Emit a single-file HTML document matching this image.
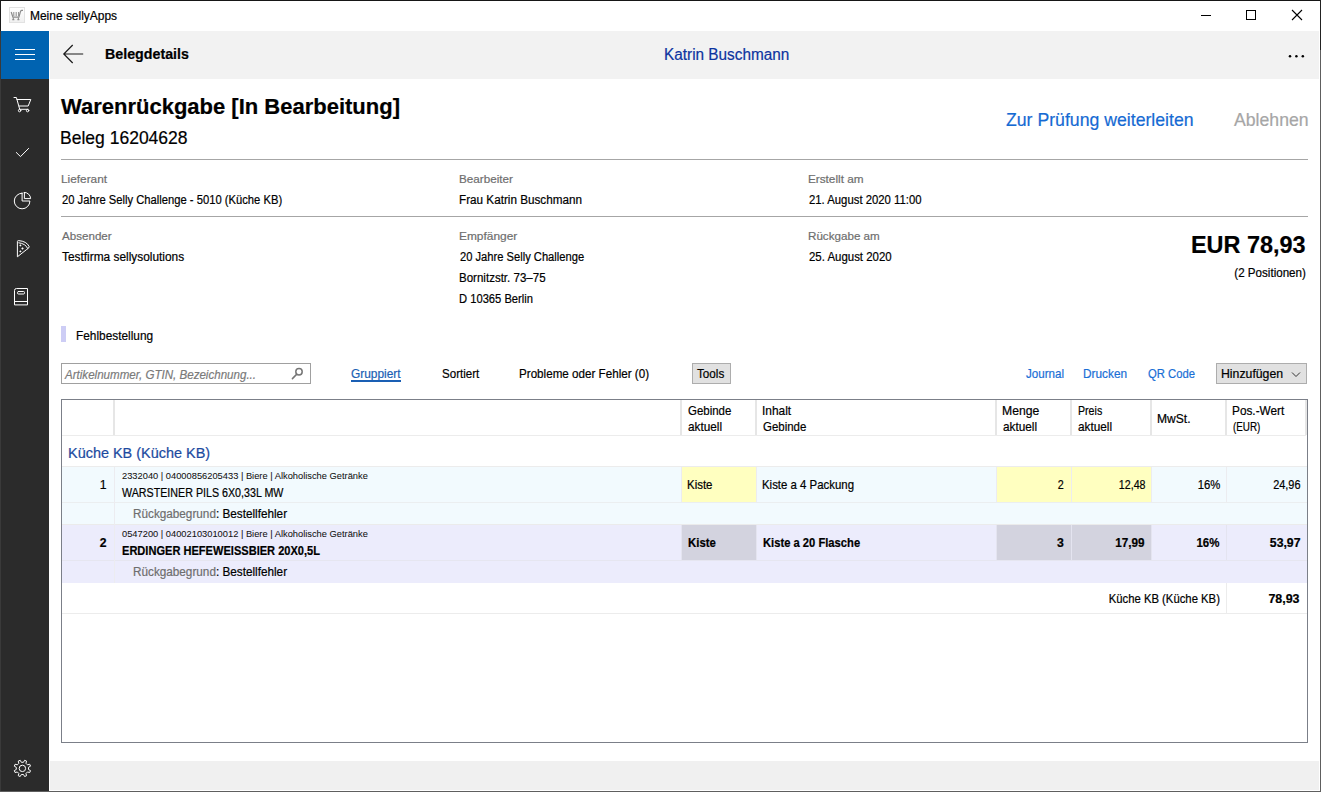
<!DOCTYPE html>
<html><head><meta charset="utf-8"><style>
html,body{margin:0;padding:0}
body{width:1321px;height:792px;position:relative;overflow:hidden;background:#fff;font-family:"Liberation Sans",sans-serif}
.t{position:absolute;white-space:nowrap;-webkit-text-stroke:0.2px currentColor}
.b{position:absolute}
svg{position:absolute;overflow:visible}

</style></head><body>
<!-- window border -->
<div class="b" style="left:0;top:0;width:1321px;height:1px;background:#161616"></div>
<div class="b" style="left:0;top:0;width:1px;height:792px;background:#3a3a3a"></div>
<div class="b" style="left:1320px;top:0;width:1px;height:792px;background:#5e5e5e"></div>
<div class="b" style="left:1320px;top:0;width:1px;height:50px;background:#222"></div>
<div class="b" style="left:0;top:0;width:1px;height:31px;background:#1a1a1a"></div>
<div class="b" style="left:0;top:791px;width:1321px;height:1px;background:#5e5e5e"></div>
<!-- title bar icon -->
<div class="b" style="left:9px;top:7px;width:14px;height:14px;border:1px solid #e2e2e2;background:linear-gradient(#fff,#f0f0f0)"></div>
<svg style="left:0;top:0" width="30" height="30"><g stroke="#8c8c8c" fill="none"><path d="M11.2 12 L12.9 17.2 H18.9 L20.6 11.2 Q21 10.3 21.8 10.3 H23" stroke-width="1.2"/><path d="M13.8 12 V16 M16.2 12 V16 M18.6 12 V16" stroke-width="1"/><path d="M13.3 17.5 V19.5 M18.4 17.5 V19.5 M12.3 19.6 H14.3 M17.4 19.6 H19.4" stroke-width="1.1"/></g></svg>
<!-- window controls -->
<div class="b" style="left:1201px;top:15px;width:10px;height:1px;background:#000"></div>
<div class="b" style="left:1246px;top:10px;width:8px;height:8px;border:1px solid #000"></div>
<svg style="left:0;top:0" width="1321" height="40"><path d="M1292 10 L1302 20 M1302 10 L1292 20" stroke="#000" stroke-width="1.1" fill="none"/></svg>
<!-- sidebar -->
<div class="b" style="left:1px;top:31px;width:48px;height:760px;background:#2b2b2b"></div>
<div class="b" style="left:1px;top:31px;width:48px;height:48px;background:#0063b1"></div>
<div class="b" style="left:15px;top:49px;width:20px;height:1px;background:#fff"></div>
<div class="b" style="left:15px;top:54px;width:20px;height:1px;background:#fff"></div>
<div class="b" style="left:15px;top:59px;width:20px;height:1px;background:#fff"></div>
<!-- header bar -->
<div class="b" style="left:50px;top:31px;width:1269px;height:48px;background:#f2f2f2"></div>
<svg style="left:0;top:0" width="100" height="80"><path d="M64 54 H83.2 M72.7 45 L63.8 54 L72.7 63" stroke="#1a1a1a" stroke-width="1.2" fill="none"/></svg>
<svg style="left:0;top:0" width="1321" height="80"><g fill="#000"><circle cx="1290" cy="56.3" r="1.25"/><circle cx="1296.4" cy="56.3" r="1.25"/><circle cx="1302.8" cy="56.3" r="1.25"/></g></svg>
<!-- separators -->
<div class="b" style="left:61px;top:159px;width:1247px;height:1px;background:#a6a6a6"></div>
<div class="b" style="left:61px;top:216px;width:1247px;height:1px;background:#a6a6a6"></div>
<!-- fehlbestellung bar -->
<div class="b" style="left:61px;top:326px;width:5px;height:16px;background:#cdcdf5"></div>
<!-- search box -->
<div class="b" style="left:61px;top:363px;width:248px;height:19px;border:1px solid #a0a0a0"></div>
<!-- gruppiert underline -->
<div class="b" style="left:351px;top:380px;width:50px;height:2px;background:#1a5fb4"></div>
<!-- tools button -->
<div class="b" style="left:692px;top:363px;width:37px;height:19px;border:1px solid #adadad;background:#e1e1e1"></div>
<!-- hinzufuegen -->
<div class="b" style="left:1216px;top:363px;width:89px;height:19px;border:1px solid #adadad;background:#e1e1e1"></div>
<svg style="left:0;top:0" width="1321" height="400"><path d="M1292 372.5 L1296 376.5 L1300 372.5" stroke="#333" stroke-width="1" fill="none"/></svg>
<!-- table -->
<div class="b" style="left:61px;top:399px;width:1245px;height:342px;border:1px solid #7b7f88"></div>
<div class="b" style="left:62px;top:435px;width:1244px;height:1px;background:#ececec"></div>
<!-- rows -->
<div class="b" style="left:62px;top:466px;width:1245px;height:1px;background:#ececec"></div>
<div class="b" style="left:62px;top:467px;width:1245px;height:57px;background:#f2fafe"></div>
<div class="b" style="left:62px;top:525px;width:1245px;height:58px;background:#ececfc"></div>
<div class="b" style="left:62px;top:502px;width:1245px;height:1px;background:#ebeef0"></div>
<div class="b" style="left:62px;top:524px;width:1245px;height:1px;background:#ebebeb"></div>
<div class="b" style="left:62px;top:560px;width:1245px;height:1px;background:#e6e6f0"></div>
<div class="b" style="left:62px;top:613px;width:1245px;height:1px;background:#ececec"></div>
<!-- cells -->
<div class="b" style="left:682px;top:467px;width:74px;height:35px;background:#ffffc0"></div>
<div class="b" style="left:997px;top:467px;width:74px;height:35px;background:#ffffc0"></div>
<div class="b" style="left:1072px;top:467px;width:79px;height:35px;background:#ffffc0"></div>
<div class="b" style="left:682px;top:525px;width:74px;height:35px;background:#d3d3df"></div>
<div class="b" style="left:997px;top:525px;width:74px;height:35px;background:#d3d3df"></div>
<div class="b" style="left:1072px;top:525px;width:79px;height:35px;background:#d3d3df"></div>
<!-- sidebar icons -->
<svg style="left:0;top:0" width="50" height="792">
<g stroke="#fff" stroke-width="1" fill="none" stroke-linecap="round" stroke-linejoin="round">
<path d="M14 97.5 H16.4 L19.7 109.3 H28"/>
<path d="M17 99.5 H30.8 L28.2 106 H19.2"/>
<circle cx="19.6" cy="110.6" r="1.2"/>
<circle cx="27.6" cy="110.6" r="1.2"/>
<path d="M16.3 152.5 L20.5 156.6 L28.6 148.4"/>
<path d="M22.1 193.2 V201 H29.9 A7.8 7.8 0 1 1 22.1 193.2 Z"/>
<path d="M24.4 192.4 V198.6 H30.6 A6.2 6.2 0 0 0 24.4 192.4 Z"/>
<path d="M17.4 256.4 V241.5 Q17.4 240.6 18.6 240.6 Q26.6 241.2 29.2 246.6 Q29 248.4 27.2 249.2 Z"/>
<path d="M18.8 242.8 Q25.6 243.6 27.6 248.3"/>

<path d="M14.5 304.5 V290.5 Q14.5 288.5 16.5 288.5 H27.5 V304.5 Z M14.5 301.5 H27.5"/>
<rect x="17.5" y="291.5" width="7" height="2.5" rx="1"/>
</g>
<g fill="#fff">
<rect x="19.6" y="244.6" width="1.6" height="1.6" transform="rotate(45 20.4 245.4)"/>
<rect x="21.6" y="247.6" width="1.8" height="1.8" transform="rotate(45 22.5 248.5)"/>
<rect x="19.6" y="250.6" width="1.6" height="1.6" transform="rotate(45 20.4 251.4)"/>
</g>
<g stroke="#fff" stroke-width="1" fill="none">
<path d="M23.47 762.29 L24.62 760.30 L26.56 761.10 L25.97 763.33 L27.47 764.83 L29.70 764.24 L30.50 766.18 L28.51 767.33 L28.51 769.47 L30.50 770.62 L29.70 772.56 L27.47 771.97 L25.97 773.47 L26.56 775.70 L24.62 776.50 L23.47 774.51 L21.33 774.51 L20.18 776.50 L18.24 775.70 L18.83 773.47 L17.33 771.97 L15.10 772.56 L14.30 770.62 L16.29 769.47 L16.29 767.33 L14.30 766.18 L15.10 764.24 L17.33 764.83 L18.83 763.33 L18.24 761.10 L20.18 760.30 L21.33 762.29 Z"/>
<circle cx="22.4" cy="768.4" r="3.2"/>
</g>
</svg>
<!-- search icon -->
<svg style="left:0;top:0" width="320" height="400"><g stroke="#767676" stroke-width="1.5" fill="none"><circle cx="299" cy="371.8" r="3.2"/><path d="M296.6 374.4 L292.4 378.6" stroke-linecap="round"/></g></svg>
<!-- table column separators -->
<div class="b" style="left:113px;top:400px;width:2px;height:35px;background:#e6e6e6"></div>
<div class="b" style="left:680px;top:400px;width:2px;height:35px;background:#e6e6e6"></div>
<div class="b" style="left:755px;top:400px;width:2px;height:35px;background:#e6e6e6"></div>
<div class="b" style="left:995px;top:400px;width:2px;height:35px;background:#e6e6e6"></div>
<div class="b" style="left:1070px;top:400px;width:2px;height:35px;background:#e6e6e6"></div>
<div class="b" style="left:1150px;top:400px;width:2px;height:35px;background:#e6e6e6"></div>
<div class="b" style="left:1225px;top:400px;width:2px;height:35px;background:#e6e6e6"></div>
<div class="b" style="left:1305px;top:400px;width:2px;height:35px;background:#e6e6e6"></div>
<div class="b" style="left:114px;top:467px;width:1px;height:116px;background:#ececf0"></div>
<div class="b" style="left:681px;top:467px;width:1px;height:35px;background:#ececf0"></div>
<div class="b" style="left:681px;top:525px;width:1px;height:35px;background:#e4e4f0"></div>
<div class="b" style="left:756px;top:467px;width:1px;height:35px;background:#ececf0"></div>
<div class="b" style="left:756px;top:525px;width:1px;height:35px;background:#e4e4f0"></div>
<div class="b" style="left:996px;top:467px;width:1px;height:35px;background:#ececf0"></div>
<div class="b" style="left:996px;top:525px;width:1px;height:35px;background:#e4e4f0"></div>
<div class="b" style="left:1071px;top:467px;width:1px;height:35px;background:#ececf0"></div>
<div class="b" style="left:1071px;top:525px;width:1px;height:35px;background:#e4e4f0"></div>
<div class="b" style="left:1151px;top:467px;width:1px;height:35px;background:#ececf0"></div>
<div class="b" style="left:1151px;top:525px;width:1px;height:35px;background:#e4e4f0"></div>
<div class="b" style="left:1226px;top:467px;width:1px;height:35px;background:#ececf0"></div>
<div class="b" style="left:1226px;top:525px;width:1px;height:35px;background:#e4e4f0"></div>
<div class="b" style="left:1226px;top:583px;width:1px;height:30px;background:#ececec"></div>
<!-- bottom bar -->
<div class="b" style="left:50px;top:761px;width:1269px;height:29px;background:#f0f0f0"></div>

<span id="t0" class="t" style="top:10.34px;font-size:12px;line-height:12px;color:#000;transform:scaleX(0.9966);transform-origin:left center;left:29.50px;">Meine sellyApps</span>
<span id="t1" class="t" style="top:47.44px;font-size:14.6px;line-height:14.6px;color:#000;font-weight:bold;transform:scaleX(0.9756);transform-origin:left center;left:104.70px;">Belegdetails</span>
<span id="t2" class="t" style="top:46.93px;font-size:15.8px;line-height:15.8px;color:#0d34a0;transform:scaleX(0.9714);transform-origin:left center;left:663.70px;">Katrin Buschmann</span>
<span id="t3" class="t" style="top:95.75px;font-size:21.8px;line-height:21.8px;color:#000;font-weight:bold;transform:scaleX(1.0092);transform-origin:left center;left:61.40px;">Warenrückgabe [In Bearbeitung]</span>
<span id="t4" class="t" style="top:130.33px;font-size:17.8px;line-height:17.8px;color:#000;transform:scaleX(0.9849);transform-origin:left center;left:60.40px;">Beleg 16204628</span>
<span id="t5" class="t" style="top:111.36px;font-size:18.6px;line-height:18.6px;color:#156ad3;transform:scaleX(0.9503);transform-origin:left center;left:1005.60px;">Zur Prüfung weiterleiten</span>
<span id="t6" class="t" style="top:111.36px;font-size:18.6px;line-height:18.6px;color:#a6a6a6;transform:scaleX(0.9492);transform-origin:left center;left:1233.80px;">Ablehnen</span>
<span id="t7" class="t" style="top:173.51px;font-size:11.8px;line-height:11.8px;color:#6e6e6e;transform:scaleX(1.0031);transform-origin:left center;left:60.80px;">Lieferant</span>
<span id="t8" class="t" style="top:194.39px;font-size:12.3px;line-height:12.3px;color:#000;transform:scaleX(0.9122);transform-origin:left center;left:61.80px;">20 Jahre Selly Challenge - 5010 (Küche KB)</span>
<span id="t9" class="t" style="top:173.51px;font-size:11.8px;line-height:11.8px;color:#6e6e6e;transform:scaleX(0.9893);transform-origin:left center;left:459.20px;">Bearbeiter</span>
<span id="t10" class="t" style="top:194.39px;font-size:12.3px;line-height:12.3px;color:#000;transform:scaleX(0.9525);transform-origin:left center;left:459.20px;">Frau Katrin Buschmann</span>
<span id="t11" class="t" style="top:173.51px;font-size:11.8px;line-height:11.8px;color:#6e6e6e;left:807.90px;">Erstellt am</span>
<span id="t12" class="t" style="top:194.39px;font-size:12.3px;line-height:12.3px;color:#000;transform:scaleX(0.9211);transform-origin:left center;left:808.90px;">21. August 2020 11:00</span>
<span id="t13" class="t" style="top:230.51px;font-size:11.8px;line-height:11.8px;color:#6e6e6e;transform:scaleX(0.9833);transform-origin:left center;left:61.80px;">Absender</span>
<span id="t14" class="t" style="top:251.29px;font-size:12.3px;line-height:12.3px;color:#000;transform:scaleX(0.9655);transform-origin:left center;left:61.80px;">Testfirma sellysolutions</span>
<span id="t15" class="t" style="top:230.51px;font-size:11.8px;line-height:11.8px;color:#6e6e6e;transform:scaleX(1.0097);transform-origin:left center;left:459.20px;">Empfänger</span>
<span id="t16" class="t" style="top:251.29px;font-size:12.3px;line-height:12.3px;color:#000;transform:scaleX(0.9078);transform-origin:left center;left:460.20px;">20 Jahre Selly Challenge</span>
<span id="t17" class="t" style="top:271.89px;font-size:12.3px;line-height:12.3px;color:#000;transform:scaleX(0.9378);transform-origin:left center;left:459.20px;">Bornitzstr. 73–75</span>
<span id="t18" class="t" style="top:292.99px;font-size:12.3px;line-height:12.3px;color:#000;transform:scaleX(0.9096);transform-origin:left center;left:459.20px;">D 10365 Berlin</span>
<span id="t19" class="t" style="top:230.51px;font-size:11.8px;line-height:11.8px;color:#6e6e6e;transform:scaleX(0.9856);transform-origin:left center;left:807.90px;">Rückgabe am</span>
<span id="t20" class="t" style="top:251.29px;font-size:12.3px;line-height:12.3px;color:#000;transform:scaleX(0.9296);transform-origin:left center;left:808.90px;">25. August 2020</span>
<span id="t21" class="t" style="top:233.83px;font-size:23px;line-height:23px;color:#000;font-weight:bold;transform:scaleX(1.0186);transform-origin:right center;right:15.70px;">EUR 78,93</span>
<span id="t22" class="t" style="top:266.69px;font-size:12.3px;line-height:12.3px;color:#000;transform:scaleX(0.9431);transform-origin:right center;right:14.70px;">(2 Positionen)</span>
<span id="t23" class="t" style="top:329.30px;font-size:13px;line-height:13px;color:#000;transform:scaleX(0.9114);transform-origin:left center;left:75.60px;">Fehlbestellung</span>
<span id="t24" class="t" style="top:367.70px;font-size:13px;line-height:13px;color:#7a7a7a;font-style:italic;transform:scaleX(0.8903);transform-origin:left center;left:64.70px;">Artikelnummer, GTIN, Bezeichnung...</span>
<span id="t25" class="t" style="top:367.57px;font-size:12.2px;line-height:12.2px;color:#1a5fb4;transform:scaleX(0.9763);transform-origin:left center;left:351.20px;">Gruppiert</span>
<span id="t26" class="t" style="top:367.57px;font-size:12.2px;line-height:12.2px;color:#000;transform:scaleX(0.9491);transform-origin:left center;left:441.60px;">Sortiert</span>
<span id="t27" class="t" style="top:367.57px;font-size:12.2px;line-height:12.2px;color:#000;transform:scaleX(0.9551);transform-origin:left center;left:518.80px;">Probleme oder Fehler (0)</span>
<span id="t28" class="t" style="top:367.57px;font-size:12.2px;line-height:12.2px;color:#000;transform:scaleX(0.9592);transform-origin:left center;left:697.40px;">Tools</span>
<span id="t29" class="t" style="top:367.57px;font-size:12.2px;line-height:12.2px;color:#1a6fd6;transform:scaleX(0.9521);transform-origin:left center;left:1025.70px;">Journal</span>
<span id="t30" class="t" style="top:367.57px;font-size:12.2px;line-height:12.2px;color:#1a6fd6;transform:scaleX(0.9708);transform-origin:left center;left:1082.90px;">Drucken</span>
<span id="t31" class="t" style="top:367.57px;font-size:12.2px;line-height:12.2px;color:#1a6fd6;transform:scaleX(0.9257);transform-origin:left center;left:1147.90px;">QR Code</span>
<span id="t32" class="t" style="top:367.57px;font-size:12.2px;line-height:12.2px;color:#000;transform:scaleX(1.0070);transform-origin:left center;left:1220.60px;">Hinzufügen</span>
<span id="t33" class="t" style="top:404.97px;font-size:12.2px;line-height:12.2px;color:#000;transform:scaleX(0.9392);transform-origin:left center;left:688.10px;">Gebinde</span>
<span id="t34" class="t" style="top:421.17px;font-size:12.2px;line-height:12.2px;color:#000;transform:scaleX(0.9675);transform-origin:left center;left:688.10px;">aktuell</span>
<span id="t35" class="t" style="top:404.97px;font-size:12.2px;line-height:12.2px;color:#000;transform:scaleX(0.9757);transform-origin:left center;left:762.10px;">Inhalt</span>
<span id="t36" class="t" style="top:421.17px;font-size:12.2px;line-height:12.2px;color:#000;transform:scaleX(0.9392);transform-origin:left center;left:763.10px;">Gebinde</span>
<span id="t37" class="t" style="top:404.97px;font-size:12.2px;line-height:12.2px;color:#000;left:1002.10px;">Menge</span>
<span id="t38" class="t" style="top:421.17px;font-size:12.2px;line-height:12.2px;color:#000;transform:scaleX(0.9675);transform-origin:left center;left:1003.10px;">aktuell</span>
<span id="t39" class="t" style="top:404.97px;font-size:12.2px;line-height:12.2px;color:#000;transform:scaleX(0.8711);transform-origin:left center;left:1078.10px;">Preis</span>
<span id="t40" class="t" style="top:421.17px;font-size:12.2px;line-height:12.2px;color:#000;transform:scaleX(0.9675);transform-origin:left center;left:1078.10px;">aktuell</span>
<span id="t41" class="t" style="top:404.97px;font-size:12.2px;line-height:12.2px;color:#000;transform:scaleX(0.9688);transform-origin:left center;left:1232.10px;">Pos.-Wert</span>
<span id="t42" class="t" style="top:421.17px;font-size:12.2px;line-height:12.2px;color:#000;transform:scaleX(0.8097);transform-origin:left center;left:1233.10px;">(EUR)</span>
<span id="t43" class="t" style="top:412.97px;font-size:12.2px;line-height:12.2px;color:#000;transform:scaleX(0.9895);transform-origin:left center;left:1157.10px;">MwSt.</span>
<span id="t44" class="t" style="top:446.05px;font-size:14px;line-height:14px;color:#1b4aa0;transform:scaleX(1.0316);transform-origin:left center;left:67.70px;">Küche KB (Küche KB)</span>
<span id="t45" class="t" style="top:479.07px;font-size:12.2px;line-height:12.2px;color:#000;right:1214.40px;">1</span>
<span id="t46" class="t" style="top:472.12px;font-size:8.6px;line-height:8.6px;color:#111;transform:scaleX(1.0832);transform-origin:left center;left:121.60px;-webkit-text-stroke:0.05px #111;">2332040 | 04000856205433 | Biere | Alkoholische Getränke</span>
<span id="t47" class="t" style="top:487.09px;font-size:12.3px;line-height:12.3px;color:#000;transform:scaleX(0.8697);transform-origin:left center;left:121.60px;">WARSTEINER PILS 6X0,33L MW</span>
<span id="t48" class="t" style="top:507.89px;font-size:12.3px;line-height:12.3px;color:#000;transform:scaleX(0.9549);transform-origin:left center;left:132.50px;"><span style="color:#6e6e6e">Rückgabegrund</span>: Bestellfehler</span>
<span id="t49" class="t" style="top:479.07px;font-size:12.2px;line-height:12.2px;color:#000;transform:scaleX(0.9382);transform-origin:left center;left:687.40px;">Kiste</span>
<span id="t50" class="t" style="top:479.07px;font-size:12.2px;line-height:12.2px;color:#000;transform:scaleX(0.9367);transform-origin:left center;left:761.90px;">Kiste a 4 Packung</span>
<span id="t51" class="t" style="top:479.07px;font-size:12.2px;line-height:12.2px;color:#000;transform:scaleX(0.8829);transform-origin:right center;right:256.90px;">2</span>
<span id="t52" class="t" style="top:479.07px;font-size:12.2px;line-height:12.2px;color:#000;transform:scaleX(0.8741);transform-origin:right center;right:176.00px;">12,48</span>
<span id="t53" class="t" style="top:479.07px;font-size:12.2px;line-height:12.2px;color:#000;transform:scaleX(0.9269);transform-origin:right center;right:100.40px;">16%</span>
<span id="t54" class="t" style="top:479.07px;font-size:12.2px;line-height:12.2px;color:#000;transform:scaleX(0.8954);transform-origin:right center;right:21.00px;">24,96</span>
<span id="t55" class="t" style="top:536.87px;font-size:12.2px;line-height:12.2px;color:#000;font-weight:bold;right:1214.40px;">2</span>
<span id="t56" class="t" style="top:530.12px;font-size:8.6px;line-height:8.6px;color:#111;transform:scaleX(1.0832);transform-origin:left center;left:121.60px;-webkit-text-stroke:0.05px #111;">0547200 | 04002103010012 | Biere | Alkoholische Getränke</span>
<span id="t57" class="t" style="top:545.09px;font-size:12.3px;line-height:12.3px;color:#000;font-weight:bold;transform:scaleX(0.8999);transform-origin:left center;left:121.60px;">ERDINGER HEFEWEISSBIER 20X0,5L</span>
<span id="t58" class="t" style="top:565.89px;font-size:12.3px;line-height:12.3px;color:#000;transform:scaleX(0.9549);transform-origin:left center;left:132.50px;"><span style="color:#6e6e6e">Rückgabegrund</span>: Bestellfehler</span>
<span id="t59" class="t" style="top:536.87px;font-size:12.2px;line-height:12.2px;color:#000;font-weight:bold;transform:scaleX(0.9351);transform-origin:left center;left:688.40px;">Kiste</span>
<span id="t60" class="t" style="top:536.87px;font-size:12.2px;line-height:12.2px;color:#000;font-weight:bold;transform:scaleX(0.9190);transform-origin:left center;left:762.90px;">Kiste a 20 Flasche</span>
<span id="t61" class="t" style="top:536.87px;font-size:12.2px;line-height:12.2px;color:#000;font-weight:bold;transform:scaleX(1.0067);transform-origin:right center;right:256.90px;">3</span>
<span id="t62" class="t" style="top:536.87px;font-size:12.2px;line-height:12.2px;color:#000;font-weight:bold;transform:scaleX(0.9581);transform-origin:right center;right:177.00px;">17,99</span>
<span id="t63" class="t" style="top:536.87px;font-size:12.2px;line-height:12.2px;color:#000;font-weight:bold;transform:scaleX(0.9422);transform-origin:right center;right:101.40px;">16%</span>
<span id="t64" class="t" style="top:536.87px;font-size:12.2px;line-height:12.2px;color:#000;font-weight:bold;transform:scaleX(1.0052);transform-origin:right center;right:21.00px;">53,97</span>
<span id="t65" class="t" style="top:592.97px;font-size:12.2px;line-height:12.2px;color:#000;transform:scaleX(0.9276);transform-origin:right center;right:101.20px;">Küche KB (Küche KB)</span>
<span id="t66" class="t" style="top:592.97px;font-size:12.2px;line-height:12.2px;color:#000;font-weight:bold;transform:scaleX(1.0203);transform-origin:right center;right:21.20px;">78,93</span>
</body></html>
